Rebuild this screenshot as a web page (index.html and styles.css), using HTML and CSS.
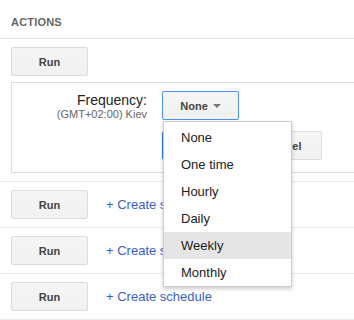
FILE: index.html
```html
<!DOCTYPE html>
<html>
<head>
<meta charset="utf-8">
<link rel="stylesheet" href="styles.css">
</head>
<body>
<div class="section">
  <div class="section-head">ACTIONS</div>
  <div class="row row-open">
    <button class="btn">Run</button>
    <div class="panel">
      <div class="field">
        <div class="field-label">
          <div class="label-main">Frequency:</div>
          <div class="label-sub">(GMT+02:00) Kiev</div>
        </div>
        <div class="select-wrap">
          <button class="btn btn-select">None <span class="caret"></span></button>
          <ul class="menu">
            <li class="menu-item">None</li>
            <li class="menu-item">One time</li>
            <li class="menu-item">Hourly</li>
            <li class="menu-item">Daily</li>
            <li class="menu-item is-hover">Weekly</li>
            <li class="menu-item">Monthly</li>
          </ul>
        </div>
      </div>
      <div class="actions">
        <button class="btn btn-primary">Save</button>
        <button class="btn">Cancel</button>
      </div>
    </div>
  </div>
  <div class="row">
    <button class="btn">Run</button>
    <a class="link" href="#">+ Create schedule</a>
  </div>
  <div class="row">
    <button class="btn">Run</button>
    <a class="link" href="#">+ Create schedule</a>
  </div>
  <div class="row">
    <button class="btn">Run</button>
    <a class="link" href="#">+ Create schedule</a>
  </div>
</div>
</body>
</html>
```
FILE: styles.css
```css
html, body {
  margin: 0;
  padding: 0;
  background: #fff;
  overflow: hidden;
}
body {
  font-family: "Liberation Sans", Arial, sans-serif;
  color: #222;
}
.section-head {
  padding: 16px 0 9px 11px;
  font-size: 11px;
  line-height: 13px;
  font-weight: bold;
  color: #666;
  letter-spacing: 0.2px;
  border-bottom: 1px solid #e5e5e5;
}
.row {
  padding: 8px 0 8px 11px;
  border-bottom: 1px solid #ebebeb;
  display: flex;
  align-items: center;
}
.row-open {
  display: block;
}
.btn {
  box-sizing: border-box;
  width: 77px;
  height: 29px;
  margin: 0;
  padding: 0;
  font-family: "Liberation Sans", Arial, sans-serif;
  font-size: 11px;
  font-weight: bold;
  color: #444;
  background: linear-gradient(#f5f5f5, #f1f1f1);
  border: 1px solid #dcdcdc;
  border-radius: 2px;
  display: block;
}
.panel {
  margin-top: 6px;
  border: 1px solid #ddd;
  border-right: 0;
  padding: 8px 0 12px 0;
}
.field {
  display: flex;
  gap: 15px;
}
.field-label {
  width: 135px;
  text-align: right;
  padding-top: 1px;
}
.label-main {
  font-size: 14px;
  line-height: 16px;
  color: #222;
}
.label-sub {
  font-size: 11px;
  line-height: 13px;
  color: #666;
}
.select-wrap {
  position: relative;
}
.btn-select {
  border-color: #4d90fe;
  display: flex;
  align-items: center;
  justify-content: center;
  gap: 5px;
}
.caret {
  width: 0;
  height: 0;
  border-left: 4px solid transparent;
  border-right: 4px solid transparent;
  border-top: 4px solid #777;
  margin-top: 1px;
}
.menu {
  position: absolute;
  top: 100%;
  left: 1px;
  width: 129px;
  box-sizing: border-box;
  margin: 0;
  padding: 2px 0 0;
  list-style: none;
  background: #fff;
  border: 1px solid rgba(0,0,0,0.2);
  box-shadow: 0 2px 4px rgba(0,0,0,0.2);
  z-index: 5;
}
.menu-item {
  height: 27px;
  line-height: 27px;
  padding-left: 17px;
  font-size: 13px;
  color: #222;
}
.menu-item.is-hover {
  background: #e5e5e5;
}
.actions {
  display: flex;
  gap: 6px;
  margin: 10px 0 0 150px;
}
.btn-primary {
  background: #4d90fe;
  border-color: #3079ed;
  color: #fff;
}
.link {
  margin-left: 18px;
  font-size: 13px;
  color: #3a5fcd;
  text-decoration: none;
}
```
